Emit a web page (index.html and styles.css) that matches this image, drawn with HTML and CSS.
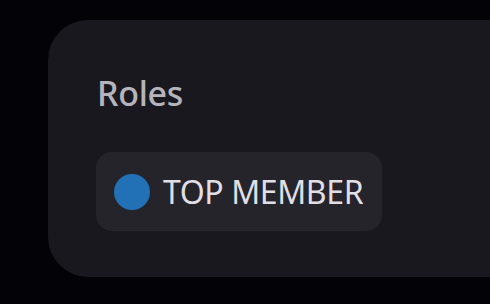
FILE: index.html
```html
<!DOCTYPE html>
<html lang="en">
<head>
    <meta charset="UTF-8">
    <title>Roles</title>
    <link rel="stylesheet" href="styles.css">
</head>
<body>
    <div class="page">
        <section class="card">
            <h2 class="card-title">Roles</h2>
            <div class="role-list">
                <div class="role-chip">
                    <span class="role-dot"></span>
                    <span class="role-name">TOP MEMBER</span>
                </div>
            </div>
        </section>
    </div>
</body>
</html>
```

FILE: styles.css
```css
* {
    margin: 0;
    padding: 0;
    box-sizing: border-box;
}

body {
    font-family: "Noto Sans", sans-serif;
    background-color: #030206;
    width: 490px;
    height: 304px;
    overflow: hidden;
}

.page {
    padding: 20px 0 0 48px;
}

.card {
    height: 257px;
    background-color: #1a181f;
    border-radius: 40px 0 0 40px;
    padding: 53px 0 0 49px;
}

.card-title {
    font-size: 34px;
    font-weight: 500;
    line-height: 40px;
    letter-spacing: -0.3px;
    color: #b5b4bb;
}

.role-list {
    display: flex;
    margin-top: 39px;
}

.role-chip {
    display: flex;
    align-items: center;
    gap: 13px;
    height: 79px;
    padding: 0 19px 0 18px;
    margin-left: -1px;
    background-color: #25242b;
    border-radius: 16px;
}

.role-dot {
    width: 36px;
    height: 36px;
    border-radius: 50%;
    background-color: #2270b5;
}

.role-name {
    font-size: 32px;
    line-height: 40px;
    letter-spacing: -0.4px;
    color: #e0dfe5;
}
```
